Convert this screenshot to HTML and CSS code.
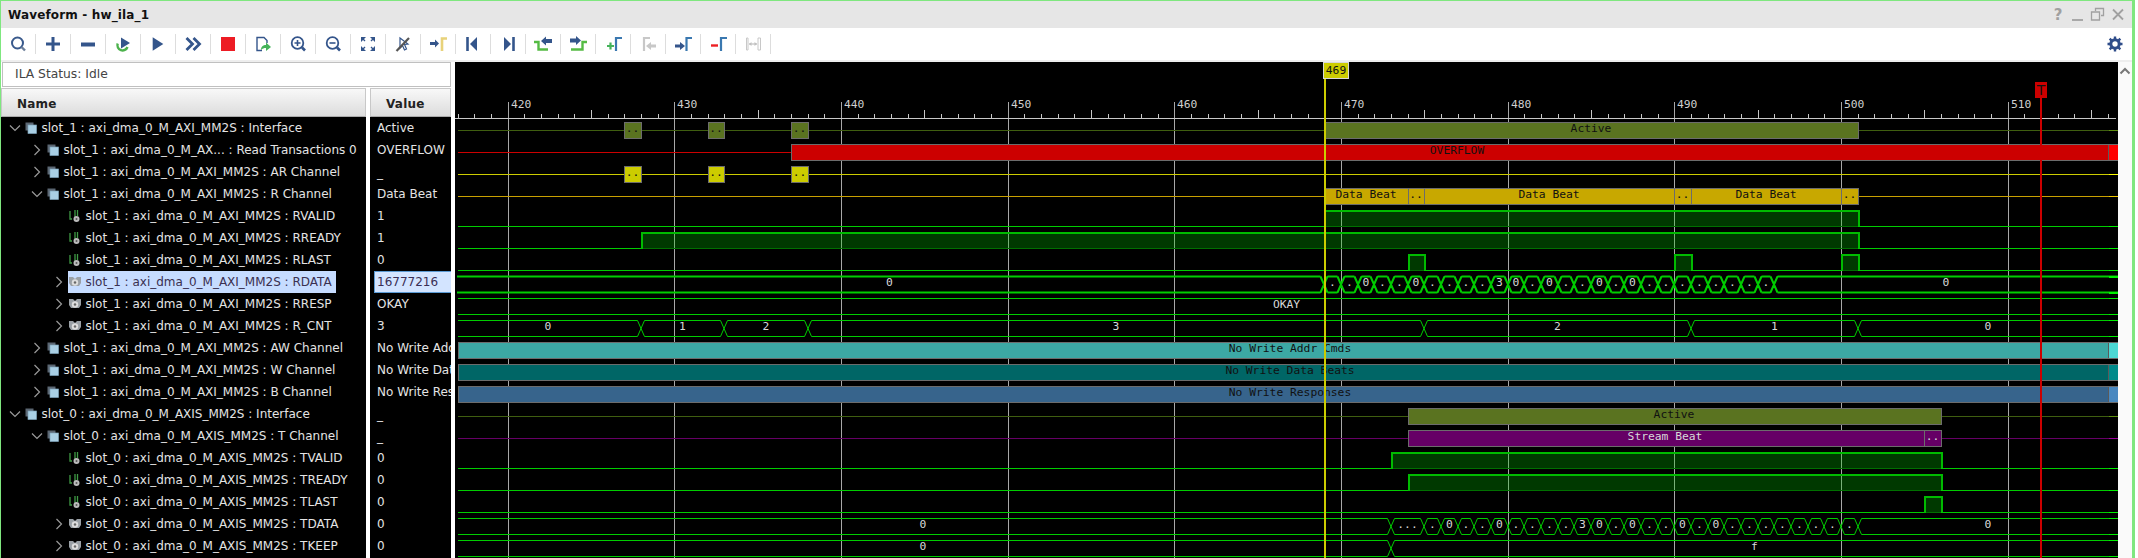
FILE: index.html
```html
<!DOCTYPE html>
<html lang="en">
<head>
<meta charset="utf-8">
<title>Waveform - hw_ila_1</title>
<link rel="stylesheet" href="styles.css">
</head>
<body>
<svg class="defs" width="0" height="0" aria-hidden="true">
  <symbol id="i-group" viewBox="0 0 12 12"><rect x="0.5" y="0.5" width="8" height="8" fill="#5b6672"/><rect x="3" y="3" width="8.5" height="8.5" fill="#a9cfe4" stroke="#7ea3ba" stroke-width=".7"/></symbol>
  <symbol id="i-sig" viewBox="0 0 12 12"><path d="M1 1v8h2M6 8V0M8.500 6V0" fill="none" stroke="#3f9a45" stroke-width="1.300"/><circle cx="7.500" cy="9" r="3" fill="#bbb"/><circle cx="7.500" cy="9" r="1" fill="#555"/></symbol>
  <symbol id="i-bus" viewBox="0 0 12 12"><path d="M0 1h4l2 2 2-2h4v6l-2 3H2L0 7z" fill="#9aa0a6"/><circle cx="6" cy="6.500" r="3.200" fill="#ddd"/><circle cx="6" cy="6.500" r="1.200" fill="#666"/></symbol>
  <symbol id="c-r" viewBox="0 0 8 12"><path d="M1.500 1l5 5-5 5" fill="none" stroke="#9a9a9a" stroke-width="1.200"/></symbol>
  <symbol id="c-d" viewBox="0 0 12 8"><path d="M1 1.500l5 5 5-5" fill="none" stroke="#9a9a9a" stroke-width="1.200"/></symbol>
</svg>
<div class="window">
  <header class="title">
    <span class="title-text">Waveform - hw_ila_1</span>
    <div class="winbtns">
      <span class="wb q">?</span>
      <span class="wb"><svg width="16" height="16" viewBox="0 0 16 16"><path d="M2 13h11" stroke="#a8a8a8" stroke-width="2"/></svg></span>
      <span class="wb"><svg width="16" height="16" viewBox="0 0 16 16"><path d="M5.500 4V1.500h8v7H11M1.500 5h8v8h-8z" fill="none" stroke="#a0a0a0" stroke-width="1.300"/></svg></span>
      <span class="wb"><svg width="16" height="16" viewBox="0 0 16 16"><path d="M3 2.500l10 10M13 2.500l-10 10" stroke="#a0a0a0" stroke-width="1.800"/></svg></span>
    </div>
  </header>
  <nav class="toolbar">
    <span class="tb"><svg viewBox="0 0 20 20"><circle cx="9.500" cy="9" r="5.500" fill="none" stroke="#3a5a8c" stroke-width="2"/><path d="M13.500 13l3.500 3.500" stroke="#6d7f99" stroke-width="2.400"/></svg></span>
    <span class="tb"><svg viewBox="0 0 20 20"><path d="M10 3v14M3 10h14" stroke="#34558b" stroke-width="3"/></svg></span>
    <span class="tb"><svg viewBox="0 0 20 20"><path d="M3 10.500h14" stroke="#34558b" stroke-width="4"/></svg></span>
    <span class="tb"><svg viewBox="0 0 20 20"><path d="M4.700 9.500A5.200 5.200 0 0 0 14.500 13" fill="none" stroke="#4cb24c" stroke-width="2.400"/><path d="M8 3.500l9 5.500-9 5.500z" fill="#34558b"/></svg></span>
    <span class="tb"><svg viewBox="0 0 20 20"><path d="M4.700 3.300L15.300 10 4.700 16.700z" fill="#34558b"/></svg></span>
    <span class="tb"><svg viewBox="0 0 20 20"><path d="M3.500 4l6 6-6 6M10.500 4l6 6-6 6" fill="none" stroke="#34558b" stroke-width="2.800"/></svg></span>
    <span class="tb"><svg viewBox="0 0 20 20"><rect x="3" y="3" width="14" height="14" fill="#ed1c24"/></svg></span>
    <span class="tb"><svg viewBox="0 0 20 20"><path d="M9 16.500H4v-13h7l3 3V9" fill="none" stroke="#34558b" stroke-width="1.400"/><path d="M8 16c0-3.500 2-5 5-5V8.500l5 4.500-5 4v-3c-2 0-3.500.5-5 2z" fill="#45b35a"/></svg></span>
    <span class="tb"><svg viewBox="0 0 20 20"><circle cx="9.500" cy="9" r="5.800" fill="none" stroke="#34558b" stroke-width="1.800"/><path d="M6.500 9h6M9.500 6v6" stroke="#34558b" stroke-width="1.600"/><path d="M14 13.500l3 3" stroke="#34558b" stroke-width="2.600"/></svg></span>
    <span class="tb"><svg viewBox="0 0 20 20"><circle cx="9.500" cy="9" r="5.800" fill="none" stroke="#34558b" stroke-width="1.800"/><path d="M6.500 9h6" stroke="#34558b" stroke-width="1.600"/><path d="M14 13.500l3 3" stroke="#34558b" stroke-width="2.600"/></svg></span>
    <span class="tb"><svg viewBox="0 0 20 20"><path d="M3 3h5L3 8zM17 3v5l-5-5zM3 17v-5l5 5zM17 17h-5l5-5z" fill="#34558b"/><path d="M4 4l3 3M16 4l-3 3M4 16l3-3M16 16l-3-3" stroke="#34558b" stroke-width="1.400"/></svg></span>
    <span class="tb"><svg viewBox="0 0 20 20"><path d="M7 4l8 6-3.500.5 2 4.500-2 1-2-4.500L7 14z" fill="none" stroke="#34558b" stroke-width="1.200"/><path d="M3.500 17L16 4" stroke="#555" stroke-width="2.200"/></svg></span>
    <span class="tb"><svg viewBox="0 0 20 20"><path d="M2 8h5V5.500l4 4-4 4V11H2z" fill="#34558b"/><path d="M14 17V4.500h5" fill="none" stroke="#e8d27a" stroke-width="2.600"/></svg></span>
    <span class="tb"><svg viewBox="0 0 20 20"><path d="M4.500 3v14" stroke="#34558b" stroke-width="2.600"/><path d="M14 3v14L7 10z" fill="#34558b"/></svg></span>
    <span class="tb"><svg viewBox="0 0 20 20"><path d="M15.500 3v14" stroke="#34558b" stroke-width="2.600"/><path d="M6 3v14l7-7z" fill="#34558b"/></svg></span>
    <span class="tb"><svg viewBox="0 0 20 20"><path d="M1 8h4.500v7.500h9.500" fill="none" stroke="#55bb44" stroke-width="2.400"/><path d="M19 5h-6V2.500L8 7l5 4.500V9h6z" fill="#34558b"/></svg></span>
    <span class="tb"><svg viewBox="0 0 20 20"><path d="M19 8h-4.500v7.500H3" fill="none" stroke="#55bb44" stroke-width="2.400"/><path d="M2 4.500h6V2l5 4.500L8 11V8.500H2z" fill="#34558b"/></svg></span>
    <span class="tb"><svg viewBox="0 0 20 20"><path d="M4 12h7M7.500 8.500v7" stroke="#45b35a" stroke-width="2.200"/><path d="M13 17V4h6" fill="none" stroke="#3a78b0" stroke-width="2.200"/></svg></span>
    <span class="tb"><svg viewBox="0 0 20 20"><path d="M6 17V4h6" fill="none" stroke="#c8c8c8" stroke-width="2.200"/><path d="M18 10.500h-5V8l-5 4 5 4v-2.500h5z" fill="#c8c8c8"/></svg></span>
    <span class="tb"><svg viewBox="0 0 20 20"><path d="M2 10.500h5V8l5 4-5 4v-2.500H2z" fill="#34558b"/><path d="M13.500 17V4H19" fill="none" stroke="#3a78b0" stroke-width="2.200"/></svg></span>
    <span class="tb"><svg viewBox="0 0 20 20"><path d="M3 11.500h7" stroke="#ed2024" stroke-width="2.400"/><path d="M13 17V4h6" fill="none" stroke="#3a78b0" stroke-width="2.200"/></svg></span>
    <span class="tb"><svg viewBox="0 0 20 20"><path d="M3.500 4v12h1.500V4zM15 4h2.500v12H15z" fill="none" stroke="#c8c8c8" stroke-width="1"/><path d="M6 10h8" stroke="#c0c0c0" stroke-width="1.200"/><path d="M6 10l2.500-2v4zM14 10l-2.500-2v4z" fill="#c0c0c0"/></svg></span>
    <span class="tb-gear"><svg width="16" height="16" viewBox="0 0 16 16"><circle cx="8" cy="8" r="4.200" fill="none" stroke="#2f4d8a" stroke-width="3"/><path d="M8 .5v15M.5 8h15M2.700 2.700l10.600 10.600M13.300 2.700L2.700 13.300" stroke="#2f4d8a" stroke-width="2.400" stroke-dasharray="2.600 9.800"/></svg></span>
  </nav>
  <main class="panes">
    <section class="left">
      <div class="status">ILA Status: Idle</div>
      <div class="columns">
        <div class="col-name">
          <div class="head">Name</div>
          <ul class="tree">
            <li class="row l0"><svg class="car"><use href="#c-d"/></svg><span class="node"><svg class="ic"><use href="#i-group"/></svg>slot_1 : axi_dma_0_M_AXI_MM2S : Interface</span></li>
            <li class="row l1"><svg class="car"><use href="#c-r"/></svg><span class="node"><svg class="ic"><use href="#i-group"/></svg>slot_1 : axi_dma_0_M_AX... : Read Transactions 0</span></li>
            <li class="row l1"><svg class="car"><use href="#c-r"/></svg><span class="node"><svg class="ic"><use href="#i-group"/></svg>slot_1 : axi_dma_0_M_AXI_MM2S : AR Channel</span></li>
            <li class="row l1"><svg class="car"><use href="#c-d"/></svg><span class="node"><svg class="ic"><use href="#i-group"/></svg>slot_1 : axi_dma_0_M_AXI_MM2S : R Channel</span></li>
            <li class="row l2"><span class="car"></span><span class="node"><svg class="ic"><use href="#i-sig"/></svg>slot_1 : axi_dma_0_M_AXI_MM2S : RVALID</span></li>
            <li class="row l2"><span class="car"></span><span class="node"><svg class="ic"><use href="#i-sig"/></svg>slot_1 : axi_dma_0_M_AXI_MM2S : RREADY</span></li>
            <li class="row l2"><span class="car"></span><span class="node"><svg class="ic"><use href="#i-sig"/></svg>slot_1 : axi_dma_0_M_AXI_MM2S : RLAST</span></li>
            <li class="row l2"><svg class="car"><use href="#c-r"/></svg><span class="node sel"><svg class="ic"><use href="#i-bus"/></svg>slot_1 : axi_dma_0_M_AXI_MM2S : RDATA</span></li>
            <li class="row l2"><svg class="car"><use href="#c-r"/></svg><span class="node"><svg class="ic"><use href="#i-bus"/></svg>slot_1 : axi_dma_0_M_AXI_MM2S : RRESP</span></li>
            <li class="row l2"><svg class="car"><use href="#c-r"/></svg><span class="node"><svg class="ic"><use href="#i-bus"/></svg>slot_1 : axi_dma_0_M_AXI_MM2S : R_CNT</span></li>
            <li class="row l1"><svg class="car"><use href="#c-r"/></svg><span class="node"><svg class="ic"><use href="#i-group"/></svg>slot_1 : axi_dma_0_M_AXI_MM2S : AW Channel</span></li>
            <li class="row l1"><svg class="car"><use href="#c-r"/></svg><span class="node"><svg class="ic"><use href="#i-group"/></svg>slot_1 : axi_dma_0_M_AXI_MM2S : W Channel</span></li>
            <li class="row l1"><svg class="car"><use href="#c-r"/></svg><span class="node"><svg class="ic"><use href="#i-group"/></svg>slot_1 : axi_dma_0_M_AXI_MM2S : B Channel</span></li>
            <li class="row l0"><svg class="car"><use href="#c-d"/></svg><span class="node"><svg class="ic"><use href="#i-group"/></svg>slot_0 : axi_dma_0_M_AXIS_MM2S : Interface</span></li>
            <li class="row l1"><svg class="car"><use href="#c-d"/></svg><span class="node"><svg class="ic"><use href="#i-group"/></svg>slot_0 : axi_dma_0_M_AXIS_MM2S : T Channel</span></li>
            <li class="row l2"><span class="car"></span><span class="node"><svg class="ic"><use href="#i-sig"/></svg>slot_0 : axi_dma_0_M_AXIS_MM2S : TVALID</span></li>
            <li class="row l2"><span class="car"></span><span class="node"><svg class="ic"><use href="#i-sig"/></svg>slot_0 : axi_dma_0_M_AXIS_MM2S : TREADY</span></li>
            <li class="row l2"><span class="car"></span><span class="node"><svg class="ic"><use href="#i-sig"/></svg>slot_0 : axi_dma_0_M_AXIS_MM2S : TLAST</span></li>
            <li class="row l2"><svg class="car"><use href="#c-r"/></svg><span class="node"><svg class="ic"><use href="#i-bus"/></svg>slot_0 : axi_dma_0_M_AXIS_MM2S : TDATA</span></li>
            <li class="row l2"><svg class="car"><use href="#c-r"/></svg><span class="node"><svg class="ic"><use href="#i-bus"/></svg>slot_0 : axi_dma_0_M_AXIS_MM2S : TKEEP</span></li>
          </ul>
        </div>
        <div class="col-value">
          <div class="head">Value</div>
          <ul class="values">
            <li>Active</li><li>OVERFLOW</li><li class="us">_</li><li>Data Beat</li><li>1</li><li>1</li><li>0</li>
            <li class="vsel">16777216</li><li>OKAY</li><li>3</li><li>No Write Addr Cmds</li><li>No Write Data Beats</li><li>No Write Responses</li>
            <li class="us">_</li><li class="us">_</li><li>0</li><li>0</li><li>0</li><li>0</li><li>0</li>
          </ul>
        </div>
      </div>
    </section>
    <section class="wave">
      <svg id="wave" class="wave-svg" width="1663" height="496" viewBox="455 62 1663 496"></svg>
    </section>
    <aside class="scroll"><svg width="12" height="8" viewBox="0 0 12 8"><path d="M1.500 6.500L6 2l4.500 4.500" fill="none" stroke="#777" stroke-width="2"/></svg></aside>
  </main>
</div>
<script src="wave.js"></script>
</body>
</html>
```
FILE: styles.css
```css
* { box-sizing: border-box; }
html, body { margin: 0; padding: 0; background: #fff; overflow: hidden; }
body { width: 2138px; height: 558px; font-family: "DejaVu Sans", sans-serif; }
.defs { position: absolute; }
.window {
  width: 2135px; height: 558px; display: flex; flex-direction: column;
  border-top: 1px solid #7fe77f; border-left: 1px solid #7fe77f; border-right: 3px solid #7fe77f;
  overflow: hidden;
}
.title { height: 27px; flex: none; background: #e6e6e6; display: flex; align-items: center; justify-content: space-between; padding-left: 7px; }
.title-text { font-weight: bold; font-size: 12px; color: #111; letter-spacing: .15px; }
.winbtns { display: flex; width: 80px; margin-right: 4px; }
.wb { width: 20px; height: 16px; display: flex; justify-content: center; }
.q { font: bold 15px/16px "DejaVu Sans", sans-serif; color: #a0a0a0; }
.toolbar { height: 34px; flex: none; background: #fff; display: flex; align-items: flex-start; border-bottom: 2px solid #eee; padding-top: 6px; }
.tb { width: 35px; height: 20px; flex: none; display: flex; justify-content: center; border-right: 1px solid #ddd; }
.tb svg { width: 20px; height: 20px; display: block; }
.tb-gear { margin-left: auto; margin-right: 9px; height: 20px; display: flex; align-items: center; }
.panes { flex: 1; display: flex; min-height: 0; }
.left { width: 450px; flex: none; display: flex; flex-direction: column; background: #fff; margin-right: 4px; }
.status { height: 25px; margin-left: 1px; margin-bottom: 1px; flex: none; border: 1px solid #c0c0c0; background: #fff; font-size: 12.3px; line-height: 23px; padding-left: 12px; color: #444; }
.columns { flex: 1; display: flex; gap: 4px; min-height: 0; }
.col-name { width: 365px; flex: none; background: #000; }
.col-value { width: 81px; flex: none; background: #000; }
.head {
  height: 29px; background: linear-gradient(#f8f8f8, #dcdcdc); border: 1px solid #c8c8c8; border-bottom-color: #aaa;
  font-weight: bold; font-size: 12px; line-height: 30px; color: #222; letter-spacing: .2px; padding-left: 15px;
}
.tree, .values { list-style: none; margin: 0; padding: 0; background: #000; }
.row { height: 22px; display: flex; align-items: center; color: #e4e4e4; font-size: 12px; white-space: nowrap; overflow: hidden; }
.l0 { padding-left: 8px; }
.l1 { padding-left: 30px; }
.l2 { padding-left: 52px; }
.car { width: 12px; height: 12px; flex: none; margin-right: 3px; }
.node { display: inline-flex; align-items: center; gap: 4.500px; height: 22px; padding: 0 4px 0 1px; }
.ic { width: 12px; height: 12px; flex: none; }
.sel { background: #c6dcff; color: #3a3050; }
.values li { height: 22px; line-height: 22px; font-size: 12px; color: #e4e4e4; padding-left: 7px; white-space: nowrap; overflow: hidden; }
.values .us { line-height: 25px; }
.values .vsel { margin-left: 4px; padding-left: 2px; line-height: 20px; background: #d3e4ff; color: #3a2f55; border: 1px solid #5b9bd5; border-right: 0; }
.wave { width: 1663px; flex: none; background: #000; }
.wave-svg { display: block; font-family: "DejaVu Sans Mono", monospace; font-size: 11.3px; }
.scroll { width: 14px; flex: none; background: #fafafa; display: flex; justify-content: center; padding-top: 5px; align-items: flex-start; }
.lbl { text-anchor: middle; fill: #111; }
.lbl-w { text-anchor: middle; fill: #d8d8d8; }
.rul { fill: #cfcfcf; }
.tlabel { font: 14px "DejaVu Sans", sans-serif; fill: #111; text-anchor: middle; }
```
FILE: wave.js
```js
(function () {
  var NS = 'http://www.w3.org/2000/svg';
  var svg = document.getElementById('wave');
  var L = 458, R = 2118, END = 2109, BOTTOM = 558;
  function x(u) { return Math.round(507.8 + 16.667 * (u - 420)); }
  function top(n) { return 122 + 22 * n; }
  function el(name, attrs, text) {
    var e = document.createElementNS(NS, name);
    for (var k in attrs) e.setAttribute(k, attrs[k]);
    if (text !== undefined) e.textContent = text;
    svg.appendChild(e);
    return e;
  }
  function hline(y, a, b, c, w) { el('rect', { x: a, y: y, width: b - a, height: w || 1, fill: c }); }
  function vline(px, a, b, c, w) { el('rect', { x: px, y: a, width: w || 1, height: b - a, fill: c }); }
  function bar(n, a, b, fill) {
    el('rect', { x: a + .5, y: top(n) + .5, width: b - a, height: 16, fill: fill, stroke: '#6c6c6c' });
  }
  function label(n, cx, t, cls) { el('text', { x: cx, y: top(n) + 10, class: cls || 'lbl' }, t); }
  function idle(n, a, b, c) { hline(top(n) + 8, a, b, c); }

  /* ruler + grid */
  for (var u = 418; u <= 516; u++) {
    var px = x(u);
    if (u % 10 === 0) {
      vline(px, 102, BOTTOM, '#a8a8a8');
      el('text', { x: px + 3, y: 108, class: 'rul' }, String(u));
    } else {
      vline(px, u % 5 === 0 ? 110 : 114, 118, '#c8c8c8');
    }
  }
  vline(458, 114, 118, '#c8c8c8');
  hline(118, 455, 2116, '#c8c8c8');

  /* digital signals */
  function digital(n, pulses) {
    var t = top(n), lo = t + 16, pos = L;
    pulses.forEach(function (p) {
      var a = x(p[0]), b = x(p[1]);
      hline(lo, pos, a, '#00cc00');
      el('rect', { x: a, y: t, width: b - a, height: 16, fill: '#00cc00', 'fill-opacity': .28 });
      hline(lo, a, b, '#007000');
      hline(t, a, b + 1, '#00bb00', 2);
      vline(a, t, lo + 1, '#00bb00', 2);
      vline(b, t, lo + 1, '#00bb00', 2);
      pos = b;
    });
    hline(lo, pos, R, '#00cc00');
    hline(lo, END, R, '#00f000');
  }

  /* bus signals: edges are unit numbers, each span has a label */
  function bus(n, spans, w) {
    var t = top(n), lo = t + 16, sw = w || 1, d = '';
    spans.forEach(function (s) {
      var a = s[0] === null ? L - (sw > 1 ? 1 : 0) : x(s[0]) + 3.5;
      var b = s[1] === null ? R : x(s[1]) - 3.5;
      d += 'M' + a + ' ' + (t + .5) + 'H' + b + 'M' + a + ' ' + (lo + .5) + 'H' + b;
      if (s[1] !== null) {
        d += 'M' + (x(s[1]) - 3.5) + ' ' + (t + .5) + 'L' + (x(s[1]) + 3.5) + ' ' + (lo + .5);
        d += 'M' + (x(s[1]) - 3.5) + ' ' + (lo + .5) + 'L' + (x(s[1]) + 3.5) + ' ' + (t + .5);
      }
    });
    el('path', { d: d, fill: 'none', stroke: '#00cc00', 'stroke-width': sw });
    hline(t, END, R, '#00f000', sw);
    hline(lo, END, R, '#00f000', sw);
    spans.forEach(function (s) {
      if (s[2] === '') return;
      var a = s[0] === null ? 455 : x(s[0]);
      var b = s[1] === null ? R : x(s[1]);
      label(n, (a + b) / 2, s[2], 'lbl-w');
    });
  }
  function hexes(start, vals) {
    return vals.split('').map(function (v, i) { return [start + i, start + i + 1, v]; });
  }
  function endCap(n, c) {
    vline(END - 1, top(n) + 1, top(n) + 16, '#5a5a5a');
    el('rect', { x: END, y: top(n) + 1, width: R - END, height: 15, fill: c });
  }
  var PAT = '..0..0....30.0..0.0........';

  /* row 0: read interface */
  idle(0, L, R, '#3f5e10');
  [[427, 428], [432, 433], [437, 438]].forEach(function (p) {
    bar(0, x(p[0]), x(p[1]), '#5a7320');
    label(0, (x(p[0]) + x(p[1])) / 2, '..');
  });
  bar(0, x(469), x(501), '#5a7320');
  label(0, 1591, 'Active');
  hline(130, END, R, '#5f8f10');

  /* row 1: transactions */
  idle(1, L, x(437), '#cc0000');
  bar(1, x(437), R + 2, '#cc0000');
  endCap(1, '#ff0000');
  label(1, 1457, 'OVERFLOW');

  /* row 2: AR channel */
  idle(2, L, R, '#cccc00');
  [[427, 428], [432, 433], [437, 438]].forEach(function (p) {
    bar(2, x(p[0]), x(p[1]), '#cccc00');
    label(2, (x(p[0]) + x(p[1])) / 2, '..');
  });
  hline(174, END, R, '#ffff00');

  /* row 3: R channel */
  idle(3, L, R, '#c8a000');
  [[469, 474, 'Data Beat'], [474, 475, '..'], [475, 490, 'Data Beat'], [490, 491, '..'], [491, 500, 'Data Beat'], [500, 501, '..']].forEach(function (p) {
    bar(3, x(p[0]), x(p[1]), '#c8a800');
    label(3, (x(p[0]) + x(p[1])) / 2, p[2]);
  });
  hline(196, END, R, '#f0c800');

  digital(4, [[469, 501]]);
  digital(5, [[428, 501]]);
  digital(6, [[474, 475], [490, 491], [500, 501]]);

  bus(7, [[null, 469, '0']].concat(hexes(469, PAT)).concat([[496, null, '0']]), 2);
  bus(8, [[null, null, 'OKAY']]);
  bus(9, [[null, 428, '0'], [428, 433, '1'], [433, 438, '2'], [438, 475, '3'], [475, 491, '2'], [491, 501, '1'], [501, null, '0']]);

  /* rows 10-12: write channels */
  [[10, '#3ca8a4', '#4cd8d4', 'No Write Addr Cmds'], [11, '#006666', '#008a8a', 'No Write Data Beats'], [12, '#37648c', '#4a88c0', 'No Write Responses']].forEach(function (r) {
    bar(r[0], L, R + 2, r[1]);
    endCap(r[0], r[2]);
    label(r[0], 1290, r[3]);
  });

  /* row 13-14: stream */
  idle(13, L, R, '#3f5e10');
  bar(13, x(474), x(506), '#5a7320');
  label(13, 1674, 'Active');
  hline(top(13) + 8, END, R, '#5f8f10');
  idle(14, L, R, '#660066');
  bar(14, x(474), x(505), '#660066');
  bar(14, x(505), x(506), '#660066');
  label(14, 1665, 'Stream Beat', 'lbl-w');
  label(14, (x(505) + x(506)) / 2, '..', 'lbl-w');
  hline(top(14) + 8, END, R, '#990099');

  digital(15, [[473, 506]]);
  digital(16, [[474, 506]]);
  digital(17, [[505, 506]]);

  bus(18, [[null, 473, '0'], [473, 475, '...']].concat(hexes(475, PAT.slice(1))).concat([[501, null, '0']]));
  bus(19, [[null, 473, '0'], [473, null, 'f']]);

  /* cursors */
  vline(1324, 78, BOTTOM, '#cccc00', 2);
  el('rect', { x: 1323.5, y: 62.5, width: 25, height: 16, fill: '#cccc00', stroke: '#d8d8d8' });
  el('text', { x: 1336, y: 74, class: 'lbl' }, '469');
  vline(2040, 98, 145, '#cc0000', 2);
  vline(2040, 160, BOTTOM, '#cc0000', 2);
  el('rect', { x: 2035, y: 82, width: 12, height: 16, fill: '#cc0000' });
  el('text', { x: 2041, y: 95, class: 'tlabel' }, 'T');
})();
```
